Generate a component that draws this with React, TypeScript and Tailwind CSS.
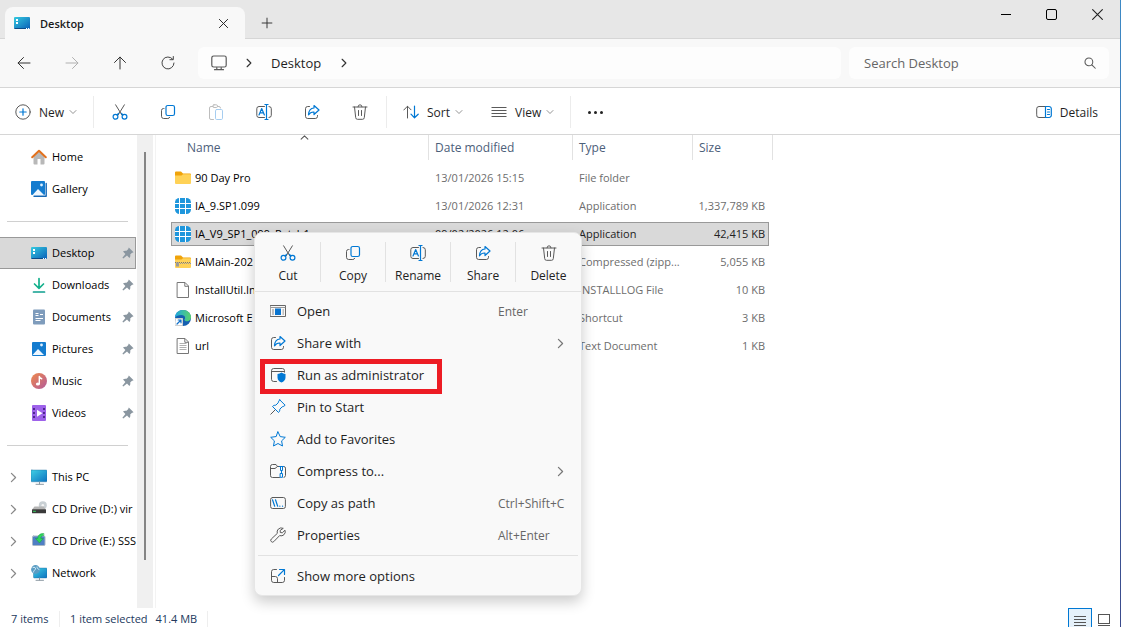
import type { ReactNode } from 'react'

const INK = '#5a5a5a'
const BLUE = '#0078d4'

function Svg({ children, size = 16, className = '' }: { children: ReactNode; size?: number; className?: string }) {
  return (
    <svg
      width={size}
      height={size}
      viewBox="0 0 16 16"
      fill="none"
      stroke={INK}
      strokeLinecap="round"
      strokeLinejoin="round"
      className={`shrink-0 ${className}`}
      aria-hidden="true"
    >
      {children}
    </svg>
  )
}

/* ---------- line icons ---------- */

const CutIcon = () => (
  <Svg>
    <path d="M3.6 0.8 9.9 11M12.4 0.8 6.1 11" />
    <circle cx="3.5" cy="12.8" r="2.4" stroke={BLUE} strokeWidth="1.2" />
    <circle cx="12.5" cy="12.8" r="2.4" stroke={BLUE} strokeWidth="1.2" />
    <path d="m5.2 11 1.2-1.7M10.8 11 9.6 9.3" stroke={BLUE} strokeWidth="1.2" />
  </Svg>
)

const CopyIcon = () => (
  <Svg>
    <path d="M4 4.5H3.4A2 2 0 0 0 1.5 6.5v5.8a2.2 2.2 0 0 0 2.2 2.2h4.1a2 2 0 0 0 1.9-1.2" />
    <rect x="6" y="1.5" width="8.5" height="10" rx="1.8" stroke={BLUE} strokeWidth="1.2" />
  </Svg>
)

const PasteIcon = () => (
  <Svg>
    <g stroke="#bdbdbd">
      <path d="M5 2.5H3A1.5 1.5 0 0 0 1.5 4v10A1.5 1.5 0 0 0 3 15.5h2.5M9.5 2.5H11A1.5 1.5 0 0 1 12.5 4" />
      <rect x="4.8" y="0.8" width="4.7" height="2.7" rx="1.2" />
    </g>
    <rect x="7.5" y="5.5" width="7" height="10" rx="1.2" stroke="#a6cdf0" />
  </Svg>
)

const RenameIcon = () => (
  <Svg>
    <path d="M8.5 2.5H3A2.2 2.2 0 0 0 .8 4.7v6.600A2.200 2.200 0 0 0 3 13.500h5.500M13 2.500a2.200 2.200 0 0 1 2.300 2.200v6.600A2.200 2.200 0 0 1 13 13.500" />
    <path d="m3 11 2.700-6.500L8.400 11M4 8.800h3.500M10.500 0.500v15M9 0.500h3M9 15.500h3" stroke={BLUE} strokeWidth="1.200" />
  </Svg>
)

const ShareIcon = () => (
  <Svg>
    <path d="M5.5 2.500H3.700A2.200 2.200 0 0 0 1.500 4.700v7.600a2.200 2.200 0 0 0 2.200 2.200h7.600a2.200 2.200 0 0 0 2.200-2.200V11.500" />
    <path d="M10 1.500 15 6l-5 4.500V8C7.500 7.800 5.800 8.800 4.500 10.800 4.700 7 6.500 4.200 10 4z" stroke={BLUE} strokeWidth="1.200" />
  </Svg>
)

const TrashIcon = () => (
  <Svg>
    <path d="M1 3h14M2.500 3l1.200 10.600a1.800 1.800 0 0 0 1.800 1.700h5a1.800 1.800 0 0 0 1.800-1.700L13.500 3M6 2.800a2 2 0 0 1 4 0M6.500 6.500v5M9.500 6.500v5" />
  </Svg>
)

const NewIcon = () => (
  <Svg>
    <circle cx="8" cy="8" r="7.200" />
    <path d="M8 4.800v6.400M4.800 8h6.400" stroke={BLUE} strokeWidth="1.200" />
  </Svg>
)

const SortIcon = () => (
  <Svg>
    <path d="M4.500 14V2.300M0.800 6l3.700-3.800L8 5.800" />
    <path d="M11.500 2v11.700M8 10.200l3.500 3.600 3.700-3.600" stroke={BLUE} strokeWidth="1.200" />
  </Svg>
)

const ViewIcon = () => (
  <Svg>
    <path d="M0.500 3.500h15M0.500 6.500h15M0.500 9.500h15M0.500 12.500h15" strokeLinecap="butt" />
  </Svg>
)

const DetailsIcon = () => (
  <Svg>
    <path d="M9.500 2.500H3A2.300 2.300 0 0 0 0.700 4.800v6A2.300 2.300 0 0 0 3 13.500h6.500" />
    <path d="M9.500 2.500H13a2.300 2.300 0 0 1 2.300 2.300v6a2.300 2.300 0 0 1-2.300 2.700H9.500zM11.500 5.500h2M11.500 8h2M11.500 10.500h2" stroke={BLUE} strokeWidth="1.200" />
  </Svg>
)

const ArrowIcon = ({ turn = '', faded = false }: { turn?: string; faded?: boolean }) => (
  <Svg className={turn}>
    <path d="M14 8H2.200M7.500 2.500 2 8l5.500 5.500" stroke={faded ? '#b0b0b0' : '#333'} />
  </Svg>
)

const RefreshIcon = () => (
  <Svg>
    <path d="M12.700 4.200A6 6 0 1 0 14 8M13.300 1.500v3.200h-3.400" stroke="#444" />
  </Svg>
)

const MonitorIcon = () => (
  <Svg>
    <rect x="0.800" y="1" width="14.400" height="11" rx="1.800" strokeWidth="1.200" />
    <path d="M5.800 12.500v1.500M10.200 12.500v1.500M3.500 14.700h9" strokeWidth="1.200" />
  </Svg>
)

const Chevron = ({ size = 12, className = '', color = '#333' }: { size?: number; className?: string; color?: string }) => (
  <Svg size={size} className={className}>
    <path d="M5 2l6 6-6 6" stroke={color} strokeWidth="1.800" />
  </Svg>
)

const CloseIcon = ({ size = 11 }: { size?: number }) => (
  <Svg size={size}>
    <path d="M2 2l12 12M14 2 2 14" stroke="#222" strokeWidth="1.400" />
  </Svg>
)

const SearchIcon = () => (
  <Svg size={12}>
    <circle cx="6.500" cy="6.500" r="5.200" strokeWidth="1.400" />
    <path d="M10.500 10.500 15 15" strokeWidth="1.400" />
  </Svg>
)

const OpenIcon = () => (
  <Svg>
    <rect x="0.500" y="2.500" width="15" height="11" stroke="#666" />
    <path d="M1 4.500h14" stroke="#999" />
    <rect x="5" y="5.500" width="6" height="6.500" fill="#0a74cf" stroke="none" />
    <path d="M2 7h2M2 9h2M2 11h2M12.500 7H14M12.500 9H14M12.500 11H14" stroke="#888" strokeLinecap="butt" />
  </Svg>
)

const AdminIcon = () => (
  <Svg>
    <path d="M6.500 14.500H3.700a2.200 2.200 0 0 1-2.200-2.200V3.700a2.200 2.200 0 0 1 2.200-2.200h8.600a2.200 2.200 0 0 1 2.200 2.200v1.500M1.500 4.500H14" />
    <path d="M11.500 5.500c1.200.9 2.400 1.300 4 1.400v3.600c0 2.400-1.600 4-4 5-2.400-1-4-2.600-4-5V6.900c1.600-.1 2.800-.5 4-1.400z" fill={BLUE} stroke="none" />
  </Svg>
)

const PinOutlineIcon = () => (
  <Svg>
    <path d="M5.300 10.700 0.800 15.200" />
    <path d="M9.800 0.900l5.300 5.300c-.6 1-1.700 1.300-2.900 1.600l-2.400 2.400c.1 1.300-.3 2.500-1.300 3.300L2.500 7.500c.8-1 2-1.400 3.300-1.300l2.400-2.400c.3-1.200.6-2.300 1.600-2.900z" stroke={BLUE} />
  </Svg>
)

const StarIcon = () => (
  <Svg>
    <path d="M8 0.900l2.200 4.700 5.100.7-3.700 3.600.9 5.100L8 12.500 3.500 15l.9-5.100L.7 6.300l5.100-.7z" stroke={BLUE} />
  </Svg>
)

const ZipIcon = () => (
  <Svg>
    <path d="M9.500 3.500H7.500L6 1.500H2.500A2 2 0 0 0 .5 3.500v8.800a2 2 0 0 0 2 2.200h7M.8 5.500H5l2.500-2M14 3.500a1.600 1.600 0 0 1 1.500 1.600v7.400a2 2 0 0 1-1.500 1.900" />
    <path d="M9.500 3.500h4M10.500 3.500v4h2v-4M11.500 7.500v3M10.500 10.500h2v3.800h-2z" stroke={BLUE} />
  </Svg>
)

const PathIcon = () => (
  <Svg>
    <rect x="0.600" y="2.500" width="14.800" height="11" rx="2" />
    <path d="M2.500 4.800l2.200 6.400M5.500 4.800l2.200 6.400M9.800 11.200h.1M12.500 11.200h.1" stroke={BLUE} strokeWidth="1.200" />
  </Svg>
)

const WrenchIcon = () => (
  <Svg>
    <path d="M12.900 1.200a4.200 4.200 0 0 0-5.600 5.200L1.300 12a1.700 1.700 0 0 0 2.500 2.600l5.800-6a4.200 4.200 0 0 0 5.400-5.400L12.300 5.800 10.300 5.500 10.200 3.800z" />
  </Svg>
)

const MoreIcon = () => (
  <Svg>
    <path d="M6.500 1.500H3.700a2.200 2.200 0 0 0-2.200 2.200v8.600a2.200 2.200 0 0 0 2.200 2.200h8.600a2.200 2.200 0 0 0 2.200-2.200V9.500M1.500 8.500h3.800a2.200 2.200 0 0 1 2.200 2.200v3.800" />
    <path d="M9.500 1.500h5v5M14.300 1.700 8.500 7.500" stroke={BLUE} strokeWidth="1.200" />
  </Svg>
)

/* ---------- coloured icons ---------- */

const DesktopIcon = () => (
  <Svg>
    <defs>
      <linearGradient id="desk" x1="0" y1="0" x2="1" y2="1">
        <stop offset="0" stopColor="#35cbe0" />
        <stop offset="1" stopColor="#0a5fb8" />
      </linearGradient>
    </defs>
    <rect x="0" y="2" width="16" height="12" rx="1" fill="url(#desk)" stroke="none" />
    <path d="M2 4h2v2H2zM2 7h2v2H2z" fill="#fff" stroke="none" />
    <path d="M1 13.500h11" stroke="#0b4b88" />
    <path d="M12 13.500h1M14 13.500h1" stroke="#fff" strokeLinecap="butt" />
  </Svg>
)

const HomeIcon = () => (
  <Svg>
    <path d="M2.500 7.500 8 2.500l5.500 5V14.500a1 1 0 0 1-1 1h-3V10h-3v5.500h-3a1 1 0 0 1-1-1z" fill="#b8b8b8" stroke="none" />
    <path d="M1.200 8.300 8 1.800l6.800 6.500" stroke="#e2711d" strokeWidth="2" />
  </Svg>
)

const PicShape = ({ gallery = false }: { gallery?: boolean }) => (
  <Svg>
    {gallery && <path d="M3 15.200h12.200V2.500" stroke="#1668b5" strokeWidth="1.400" />}
    <rect x={gallery ? 0 : 1} y={gallery ? 0 : 1} width="14" height="14" rx="1" fill="#147ccf" stroke="none" />
    <path d="M1.500 14 7 8l6 6z" fill="#eef7ff" stroke="none" />
    <circle cx="10.500" cy="4" r="1.400" fill="#dff1ff" stroke="none" />
  </Svg>
)

const DownloadIcon = () => (
  <Svg>
    <path d="M8 1.500v9.500M3.500 7 8 11.300 12.500 7" stroke="#14b08c" strokeWidth="1.700" />
    <path d="M2.500 15h11" stroke="#0d9e8e" strokeWidth="1.700" />
  </Svg>
)

const DocumentsIcon = () => (
  <Svg>
    <rect x="2" y="0.500" width="12" height="15" rx="1" fill="#7f9cbc" stroke="none" />
    <path d="M4.500 4.500h3M4.500 6.500h3M9 5.500h3M4.500 9.500h7.500M4.500 11.500h5" stroke="#fff" strokeLinecap="butt" />
  </Svg>
)

const MusicIcon = () => (
  <Svg>
    <defs>
      <linearGradient id="music" x1="0" y1="0" x2="1" y2="1">
        <stop offset="0" stopColor="#f08a4b" />
        <stop offset="1" stopColor="#b25a9b" />
      </linearGradient>
    </defs>
    <circle cx="8" cy="8" r="8" fill="url(#music)" stroke="none" />
    <ellipse cx="6.800" cy="11" rx="1.900" ry="1.600" fill="#fff" stroke="none" />
    <path d="M8.300 11V3.500c.3 1.500 1.200 1.800 2.500 2.300" stroke="#fff" strokeWidth="1.400" />
  </Svg>
)

const VideosIcon = () => (
  <Svg>
    <rect x="1" y="0" width="14" height="16" rx="1" fill="#9e62ea" stroke="none" />
    <path d="M3 3v11M13 3v11" stroke="#3c1b78" strokeWidth="1.600" strokeDasharray="2 2" strokeLinecap="butt" />
    <path d="M6 4.800v7l5.500-3.500z" fill="#fff" stroke="none" />
  </Svg>
)

const PcIcon = ({ globe = false }: { globe?: boolean }) => (
  <Svg>
    <defs>
      <linearGradient id="pc" x1="0" y1="0" x2="1" y2="1">
        <stop offset="0" stopColor="#3fd0e4" />
        <stop offset="1" stopColor="#0d72c0" />
      </linearGradient>
    </defs>
    <rect x={globe ? 2.5 : 0} y={globe ? 3 : 1} width={globe ? 13.5 : 16} height={globe ? 10 : 11.8} rx="0.800" fill="url(#pc)" stroke="#1b6a9c" strokeWidth="0.400" />
    <path d="M8.500 13v2M5 15.300h7.500" stroke="#8b98a2" />
    {globe && (
      <>
        <circle cx="4.500" cy="4.500" r="4.400" fill="#5b9dc4" stroke="none" />
        <path d="M2 2.500c1.500-.8 3 .2 2.500 1.500S2.500 5.500 2.500 7M6 2c0 1.500 1 2 2 2.500" stroke="#d5ecf7" />
      </>
    )}
  </Svg>
)

const DriveIcon = () => (
  <Svg>
    <circle cx="11.800" cy="4.200" r="4" fill="#c9d0d4" stroke="none" />
    <circle cx="11.800" cy="4.200" r="1.300" fill="#f4f4f4" stroke="none" />
    <path d="M3.500 5.500h9l2.500 3H1z" fill="#b5b5b5" stroke="none" />
    <rect x="1" y="8.300" width="14" height="4" rx="0.500" fill="#3a3a3a" stroke="none" />
    <path d="M2.500 10.300h2" stroke="#37d25f" />
  </Svg>
)

const InstallerIcon = () => (
  <Svg>
    <rect x="1.500" y="3" width="12.500" height="9.500" rx="1" fill="#4f7fc4" stroke="#a9b7c6" />
    <path d="M12.500 0.500C8.500.5 6.800 2.500 6.800 5.500H4.500l4 4.500 3.700-4.500H9.800c0-1.800.8-2.700 2.700-3z" fill="#2fd65c" stroke="#159a3e" strokeWidth="0.500" />
  </Svg>
)

const PinIcon = () => (
  <svg width="12" height="12" viewBox="0 0 12 12" className="shrink-0" aria-hidden="true">
    <path d="M6.800.4 11.600 5.200l-1.800.7-1.600 1.600c.3 1.400.1 2.600-.8 3.500L5 8.600 1.300 11.600l-.9-.9L3.400 7 1 4.600c.9-.9 2.100-1.100 3.500-.8l1.600-1.600z" fill="#8a96a0" />
  </svg>
)

const FolderIcon = ({ zipped = false }: { zipped?: boolean }) => (
  <Svg>
    <path d="M0 2.500a1 1 0 0 1 1-1h5l2 2h7a1 1 0 0 1 1 1v3H0z" fill="#f0a30a" stroke="none" />
    <path d="M0 5.500h6.500l1.500-1.200h7.200a.8.800 0 0 1 .8.800v8a1 1 0 0 1-1 1H1a1 1 0 0 1-1-1z" fill="#ffd257" stroke="none" />
    {zipped && (
      <>
        <path d="M0 8.500h16" stroke="#777" strokeDasharray="1 1" strokeLinecap="butt" />
        <path d="M1 9.500h15" stroke="#999" strokeDasharray="1 1" strokeLinecap="butt" />
        <path d="M1 8.500h3v4H1z" fill="#9a9a9a" stroke="none" />
      </>
    )}
  </Svg>
)

const AppIcon = () => (
  <Svg>
    <rect x="0" y="0" width="16" height="16" rx="4.500" fill="#1e96dc" stroke="none" />
    <path d="M4.500 0v16M10.500 0v16M0 5.500h16M0 10.500h16" stroke="#fff" strokeLinecap="butt" />
  </Svg>
)

const FileIcon = ({ lines = false }: { lines?: boolean }) => (
  <Svg>
    <path d="M2.500.5h7.500l3.500 3.500v11.500h-11zM9.800.8v3.500h3.500" fill="#fff" stroke="#777" strokeLinejoin="miter" />
    {lines && <path d="M4.500 5.500h7M4.500 7.500h7M4.500 9.500h7M4.500 11.500h7" stroke="#b0b0b0" strokeLinecap="butt" />}
  </Svg>
)

const EdgeIcon = () => (
  <Svg>
    <defs>
      <linearGradient id="edge" x1="0" y1="0" x2="1" y2="0">
        <stop offset="0" stopColor="#1ea7e0" />
        <stop offset="1" stopColor="#5bd36a" />
      </linearGradient>
    </defs>
    <circle cx="8" cy="8" r="8" fill="#155fb0" stroke="none" />
    <path d="M0 7.500C.3 3 3.600 0 8 0c4.700 0 8 3.400 8 7.300 0 2.400-1.700 3.900-3.900 3.900-1.800 0-2.700-.7-2.700-1.500 0-.5.700-.8.700-2C10.100 6 8.500 5 6.300 5 3.500 5 1.200 6 0 7.500z" fill="url(#edge)" stroke="none" />
    <rect x="0.500" y="8.500" width="7" height="7" fill="#fff" stroke="#cfcfcf" />
    <path d="M2 14l4-4M3.200 10H6v2.800" stroke="#1271c9" strokeWidth="1.200" />
  </Svg>
)

/* ---------- data ---------- */

const QUICK_ACCESS = [
  { label: 'Desktop', icon: <DesktopIcon />, selected: true },
  { label: 'Downloads', icon: <DownloadIcon /> },
  { label: 'Documents', icon: <DocumentsIcon /> },
  { label: 'Pictures', icon: <PicShape /> },
  { label: 'Music', icon: <MusicIcon /> },
  { label: 'Videos', icon: <VideosIcon /> },
]

const DEVICES = [
  { label: 'This PC', icon: <PcIcon /> },
  { label: 'CD Drive (D:) vir', icon: <DriveIcon /> },
  { label: 'CD Drive (E:) SSS', icon: <InstallerIcon /> },
  { label: 'Network', icon: <PcIcon globe /> },
]

const FILES = [
  { name: '90 Day Pro', icon: <FolderIcon />, date: '13/01/2026 15:15', type: 'File folder', size: '' },
  { name: 'IA_9.SP1.099', icon: <AppIcon />, date: '13/01/2026 12:31', type: 'Application', size: '1,337,789 KB' },
  { name: 'IA_V9_SP1_099_Patch1', icon: <AppIcon />, date: '09/02/2026 12:06', type: 'Application', size: '42,415 KB', selected: true },
  { name: 'IAMain-202', icon: <FolderIcon zipped />, date: '', type: 'Compressed (zipp...', size: '5,055 KB' },
  { name: 'InstallUtil.In', icon: <FileIcon />, date: '', type: 'INSTALLLOG File', size: '10 KB' },
  { name: 'Microsoft E', icon: <EdgeIcon />, date: '', type: 'Shortcut', size: '3 KB' },
  { name: 'url', icon: <FileIcon lines />, date: '', type: 'Text Document', size: '1 KB' },
]

const TOOLS = [
  { label: 'Cut', icon: <CutIcon /> },
  { label: 'Copy', icon: <CopyIcon /> },
  { label: 'Paste', icon: <PasteIcon />, disabled: true },
  { label: 'Rename', icon: <RenameIcon /> },
  { label: 'Share', icon: <ShareIcon /> },
  { label: 'Delete', icon: <TrashIcon /> },
]

const MENU_ITEMS = [
  { label: 'Open', icon: <OpenIcon />, keys: 'Enter' },
  { label: 'Share with', icon: <ShareIcon />, submenu: true },
  { label: 'Run as administrator', icon: <AdminIcon />, marked: true },
  { label: 'Pin to Start', icon: <PinOutlineIcon /> },
  { label: 'Add to Favorites', icon: <StarIcon /> },
  { label: 'Compress to...', icon: <ZipIcon />, submenu: true },
  { label: 'Copy as path', icon: <PathIcon />, keys: 'Ctrl+Shift+C' },
  { label: 'Properties', icon: <WrenchIcon />, keys: 'Alt+Enter' },
]

/* ---------- parts ---------- */

function TitleBar() {
  return (
    <header className="flex h-[39px] items-end border-b border-[#d6d6d6] bg-[#e7e7e7] pl-[5px]">
      <div className="-mb-px flex h-8 w-60 items-center rounded-t-lg bg-[#f8f8f8] pr-4 pl-[9px]">
        <DesktopIcon />
        <span className="ml-[10px] flex-1 pt-[2px] text-[11px] font-semibold text-[#1a1a1a]">Desktop</span>
        <button type="button" aria-label="Close tab">
          <CloseIcon />
        </button>
      </div>
      <button type="button" aria-label="New tab" className="flex h-8 w-11 items-center justify-center pt-[2px]">
        <Svg size={12}>
          <path d="M8 1.500v13M1.500 8h13" stroke="#333" strokeWidth="1.300" />
        </Svg>
      </button>
      <div className="ml-auto flex h-7 self-start">
        <button type="button" aria-label="Minimize" className="flex w-[46px] items-center justify-center">
          <span className="h-px w-[10px] bg-black" />
        </button>
        <button type="button" aria-label="Maximize" className="flex w-[45px] items-center justify-center">
          <span className="size-[11px] rounded-[2px] border border-black" />
        </button>
        <button type="button" aria-label="Close" className="flex w-[46px] items-center justify-center">
          <CloseIcon size={13} />
        </button>
      </div>
    </header>
  )
}

function AddressBar() {
  return (
    <div className="flex h-[49px] items-center border-b border-[#d6d6d6] bg-[#f8f8f8] pr-[11px]">
      <nav className="flex w-[198px] shrink-0">
        <button type="button" aria-label="Back" className="flex w-12 justify-center"><ArrowIcon /></button>
        <button type="button" aria-label="Forward" disabled className="flex w-12 justify-center"><ArrowIcon turn="rotate-180" faded /></button>
        <button type="button" aria-label="Up" className="flex w-12 justify-center"><ArrowIcon turn="rotate-90" /></button>
        <button type="button" aria-label="Refresh" className="flex w-12 justify-center"><RefreshIcon /></button>
      </nav>
      <div className="flex h-8 flex-1 items-center rounded-md bg-[#fdfdfd] pl-[13px] text-[13px] text-[#1f1f1f]">
        <MonitorIcon />
        <Chevron size={10} className="mx-[17px]" />
        <a href="#desktop" className="w-[51px] pt-[2px]">Desktop</a>
        <Chevron size={10} className="mx-[17px]" />
      </div>
      <label className="ml-2 flex h-8 w-[260px] items-center rounded-md bg-[#fdfdfd] pr-[13px] pl-[15px]">
        <input
          type="search"
          aria-label="Search Desktop"
          placeholder="Search Desktop"
          className="min-w-0 flex-1 bg-transparent pt-[2px] text-[13px] outline-none placeholder:text-[#666]"
        />
        <SearchIcon />
      </label>
    </div>
  )
}

function Divider() {
  return <span className="h-8 w-px bg-[#ececec]" />
}

function Toolbar() {
  return (
    <div className="flex h-[47px] items-center border-b border-[#d6d6d6] bg-white pt-[2px] pr-[22px] text-xs text-[#1f1f1f]">
      <button type="button" className="flex w-[93px] items-center pl-[15px]">
        <NewIcon />
        <span className="ml-2 pt-[2px]">New</span>
        <Chevron size={8} className="ml-[5px] rotate-90" color="#888" />
      </button>
      <Divider />
      <div className="flex w-[292px] pl-[2px]">
        {TOOLS.map(tool => (
          <button key={tool.label} type="button" aria-label={tool.label} disabled={tool.disabled} className="flex w-12 justify-center">
            {tool.icon}
          </button>
        ))}
      </div>
      <Divider />
      <button type="button" className="flex w-[88px] items-center pl-4">
        <SortIcon />
        <span className="ml-2 pt-[2px]">Sort</span>
        <Chevron size={8} className="ml-[5px] rotate-90" color="#888" />
      </button>
      <button type="button" className="flex w-[95px] items-center pl-4">
        <ViewIcon />
        <span className="ml-2 pt-[2px]">View</span>
        <Chevron size={8} className="ml-[5px] rotate-90" color="#888" />
      </button>
      <Divider />
      <button type="button" aria-label="See more" className="flex w-12 justify-center gap-[3px]">
        <span className="size-[3px] rounded-full bg-[#222]" />
        <span className="size-[3px] rounded-full bg-[#222]" />
        <span className="size-[3px] rounded-full bg-[#222]" />
      </button>
      <button type="button" className="ml-auto flex items-center gap-2">
        <DetailsIcon />
        <span className="pt-[2px]">Details</span>
      </button>
    </div>
  )
}

type SideItemProps = { label: string; icon: ReactNode; selected?: boolean; pinned?: boolean; expandable?: boolean }

function SideItem({ label, icon, selected, pinned, expandable }: SideItemProps) {
  return (
    <a
      href="#folder"
      className={`flex h-8 items-center border border-l-0 whitespace-nowrap ${selected ? 'border-[#999] bg-[#d9d9d9]' : 'border-transparent'}`}
    >
      <span className="flex w-[31px] shrink-0 pl-2">{expandable && <Chevron size={11} color="#888" />}</span>
      {icon}
      <span className="ml-[5px] min-w-0 flex-1">{label}</span>
      {pinned && <span className="mr-px"><PinIcon /></span>}
    </a>
  )
}

function Sidebar() {
  return (
    <aside className="flex w-[153px] shrink-0 text-[11px] text-black">
      <nav className="w-[137px] pt-[6px] pr-px pb-[19px]">
        <SideItem label="Home" icon={<HomeIcon />} />
        <SideItem label="Gallery" icon={<PicShape gallery />} />
        <hr className="my-4 mr-2 ml-[7px] -mb-px border-[#d0d0d0]" />
        <div className="pt-4">
          {QUICK_ACCESS.map(item => <SideItem key={item.label} {...item} pinned />)}
        </div>
        <hr className="my-4 mr-2 ml-[7px] -mb-px border-[#d0d0d0]" />
        <div className="pt-4">
          {DEVICES.map(item => <SideItem key={item.label} {...item} expandable />)}
        </div>
      </nav>
      <div className="flex w-4 justify-center bg-[#f0f0f0] pt-[17px] pb-12">
        <span className="w-[2px] bg-[#858585]" />
      </div>
    </aside>
  )
}

function FileTable() {
  return (
    <table className="ml-[15px] w-[602px] table-fixed border-separate border-spacing-0 text-[11px] text-[#6d6d6d]">
      <colgroup>
        <col className="w-[257px]" />
        <col className="w-[144px]" />
        <col className="w-[120px]" />
        <col className="w-[77px]" />
        <col className="w-1" />
      </colgroup>
      <thead>
        <tr className="h-[25px] text-left text-xs text-[#4c607a]">
          <th scope="col" aria-sort="ascending" className="relative p-0 pl-4 font-normal">
            Name
            <Chevron size={9} className="absolute top-[-2px] left-[129px] -rotate-90" color="#555" />
          </th>
          <th scope="col" className="border-l border-[#e2e2e2] p-0 pl-[6px] font-normal">Date modified</th>
          <th scope="col" className="border-l border-[#e2e2e2] p-0 pl-[6px] font-normal">Type</th>
          <th scope="col" className="border-l border-[#e2e2e2] p-0 pl-[6px] font-normal">Size</th>
          <td className="border-r border-[#e2e2e2] p-0" />
        </tr>
        <tr className="h-1" />
      </thead>
      <tbody>
        {FILES.map(file => {
          const fill = file.selected ? 'border-[#999] bg-[#d9d9d9] text-[#222]' : 'border-transparent'
          return (
            <tr key={file.name} className="h-7">
              <td className="p-0">
                <div className={`flex h-6 items-center gap-1 overflow-hidden border border-r-0 pl-[3px] whitespace-nowrap ${fill}`}>
                  {file.icon}
                  <span className="text-black">{file.name}</span>
                </div>
              </td>
              <td className="p-0">
                <div className={`flex h-6 items-center border-y pl-[7px] ${fill}`}>{file.date}</div>
              </td>
              <td className="p-0">
                <div className={`flex h-6 items-center border-y pl-[7px] whitespace-nowrap ${fill}`}>{file.type}</div>
              </td>
              <td className="p-0">
                <div className={`flex h-6 items-center justify-end border border-l-0 pr-[3px] whitespace-nowrap ${fill}`}>{file.size}</div>
              </td>
            </tr>
          )
        })}
      </tbody>
    </table>
  )
}

function ContextMenu() {
  return (
    <div role="menu" className="absolute top-[97px] left-[98px] w-[328px] rounded-lg border border-[#e6e6e6] bg-[#f9f9f9] pb-[3px] text-[#1f1f1f] shadow-[0_6px_14px_rgba(0,0,0,0.2)]">
      <div className="flex h-[59px] items-center border-b border-[#e2e2e2] pl-px text-xs">
        {TOOLS.filter(tool => !tool.disabled).map(tool => (
          <button
            key={tool.label}
            type="button"
            role="menuitem"
            className="flex h-10 w-[65px] flex-col items-center justify-between border-r border-[#e2e2e2] pt-[3px] last:border-r-0"
          >
            {tool.icon}
            <span className="leading-3">{tool.label}</span>
          </button>
        ))}
      </div>
      <div className="pt-[3px]">
        {MENU_ITEMS.map(item => (
          <button key={item.label} type="button" role="menuitem" className="relative flex h-8 w-full items-center pl-[15px] text-left text-[13px]">
            {item.icon}
            <span className="ml-[11px] flex-1 pt-[2px]">{item.label}</span>
            {item.keys && <span className="w-[83px] pt-[2px] text-xs text-[#666]">{item.keys}</span>}
            {item.submenu && <Chevron size={11} className="mr-[15px]" color="#777" />}
            {item.marked && <span className="absolute top-0 left-[5px] h-[35px] w-[182px] border-[5px] border-[#ed1c24]" />}
          </button>
        ))}
      </div>
      <hr className="mx-[3px] my-1 border-[#e2e2e2]" />
      <button type="button" role="menuitem" className="flex h-8 w-full items-center pl-[15px] text-[13px]">
        <MoreIcon />
        <span className="ml-[11px] pt-[2px]">Show more options</span>
      </button>
    </div>
  )
}

function StatusBar() {
  return (
    <footer className="flex h-[19px] items-start overflow-hidden pr-[9px] pl-[11px] text-[11px] leading-4 text-[#23395d]">
      <div className="flex items-center pt-[3px]">
        <span className="w-[49px] border-r border-[#eee]">7 items</span>
        <span className="ml-[10px] whitespace-nowrap">1 item selected</span>
        <span className="ml-2 border-r border-[#eee] pr-[10px] whitespace-nowrap">41.4 MB</span>
      </div>
      <div className="ml-auto flex items-start gap-[5px]">
        <button type="button" aria-label="Details view" className="flex h-[23px] w-6 flex-col items-center gap-[2px] border border-[#0078d4] bg-[#e5f1fa] pt-[7px]">
          <span className="h-px w-3 bg-[#555]" />
          <span className="h-px w-3 bg-[#555]" />
          <span className="h-px w-3 bg-[#555]" />
          <span className="h-px w-3 bg-[#555]" />
        </button>
        <button type="button" aria-label="Thumbnail view" className="mt-[6px] flex w-[14px] flex-col items-center gap-px">
          <span className="h-[10px] w-3 border border-[#555]" />
          <span className="h-px w-3 bg-[#555]" />
        </button>
      </div>
    </footer>
  )
}

export default function App() {
  return (
    <div className="flex bg-white font-['Open_Sans','Noto_Sans',sans-serif]">
      <div className="min-w-0 flex-1">
        <TitleBar />
        <AddressBar />
        <Toolbar />
        <div className="flex">
          <Sidebar />
          <main className="relative ml-[2px] flex-1 border-l border-[#f3f3f3]">
            <FileTable />
            <ContextMenu />
          </main>
        </div>
        <StatusBar />
      </div>
      <div className="w-px bg-linear-to-b from-[#3d8ac6] to-[#3a4a8c]" />
    </div>
  )
}
